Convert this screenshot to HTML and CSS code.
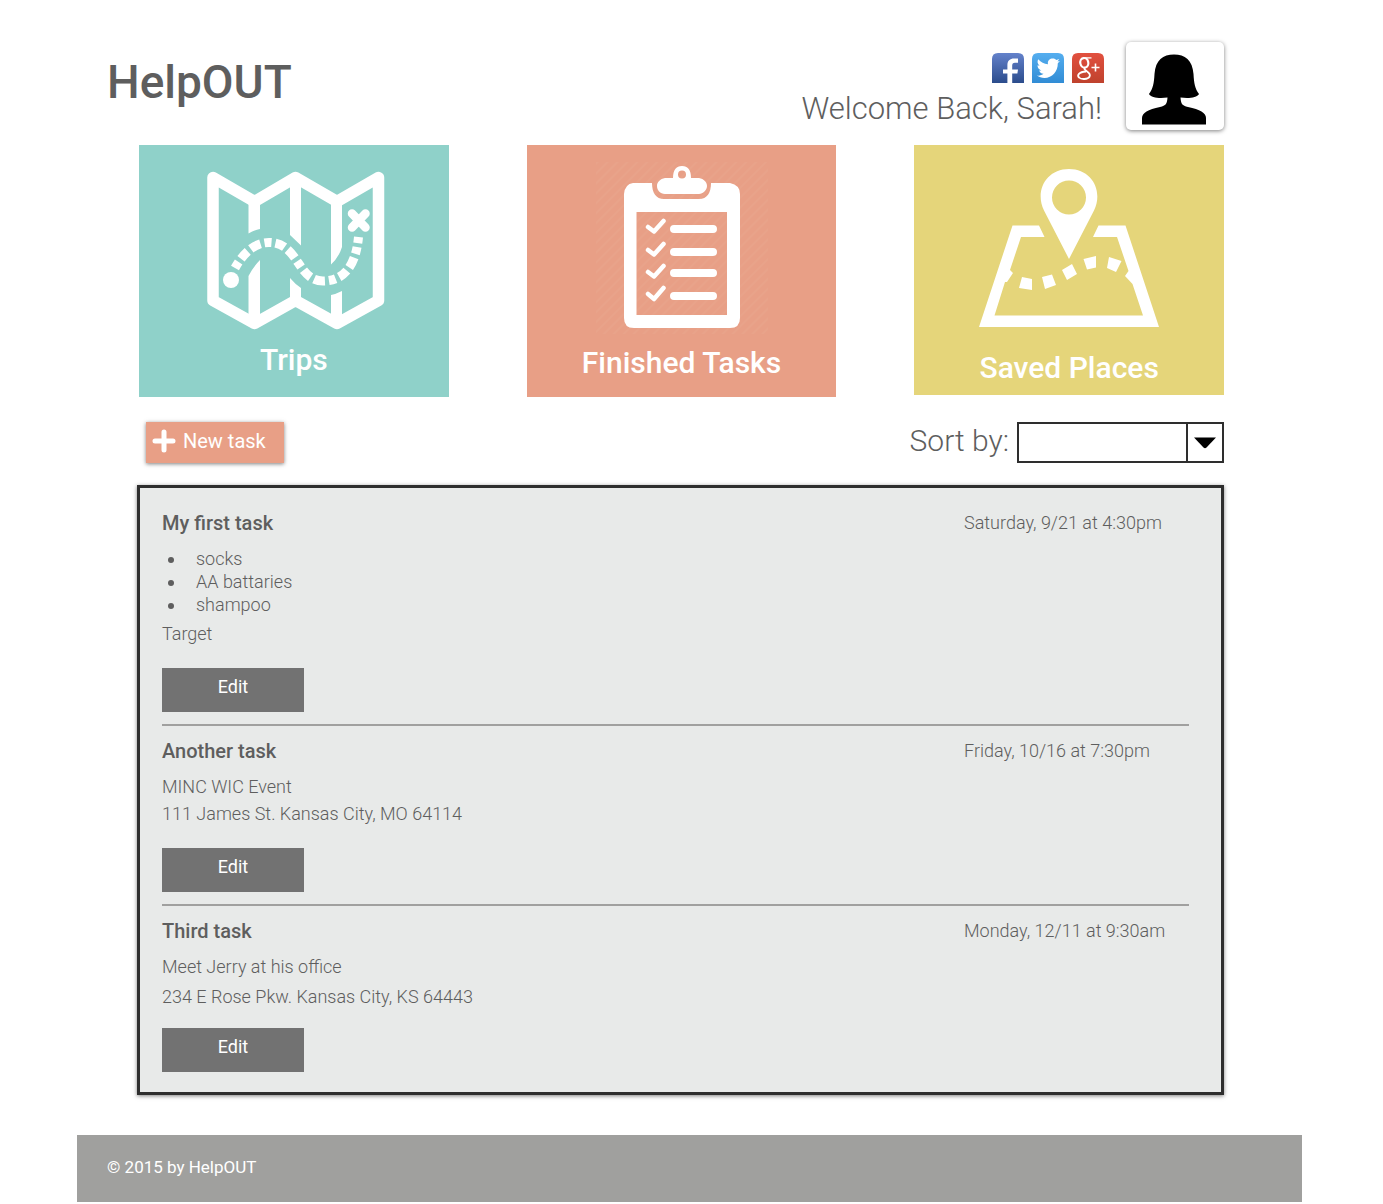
FILE: index.html
```html
<!DOCTYPE html>
<html lang="en">
<head>
<meta charset="utf-8">
<meta name="viewport" content="width=device-width, initial-scale=1">
<title>HelpOUT</title>
<link rel="stylesheet" href="styles.css">
</head>
<body>
<div class="page">
  <header class="header">
    <h1 class="brand">HelpOUT</h1>
    <div class="account">
      <div class="account-info">
        <nav class="social" aria-label="Social media">
          <a href="#" aria-label="Facebook">
            <svg width="32" height="30" viewBox="0 0 32 30">
              <defs><linearGradient id="fb" x1="0" y1="0" x2="0" y2="1"><stop offset="0" stop-color="#6482cb"/><stop offset="1" stop-color="#2b4c8c"/></linearGradient></defs>
              <path d="M0 30V6Q0 0 6 0H26Q32 0 32 6V30Z" fill="url(#fb)"/>
              <path d="M15.400 30V20.500H11V16.500H15.400V12.500C15.400 7.500 18 5.500 22 5.500H26V9.700H23C20.800 9.700 20.200 10.800 20.200 12.800V16.500H26L25.400 20.500H20.200V30Z" fill="#fff"/>
            </svg>
          </a>
          <a href="#" aria-label="Twitter">
            <svg width="32" height="30" viewBox="0 0 32 30">
              <defs><linearGradient id="tw" x1="0" y1="0" x2="0" y2="1"><stop offset="0" stop-color="#55aeef"/><stop offset="1" stop-color="#318cd5"/></linearGradient></defs>
              <path d="M0 30V6Q0 0 6 0H26Q32 0 32 6V30Z" fill="url(#tw)"/>
              <path d="M5 22.600C8 22.900 10 22 11.500 20.800C9 20.600 7.700 19.200 7.200 17.400H9.300C6.800 16.500 5.500 14.600 5.500 12.200L7.600 12.800C5.500 11 5 8.500 6.200 6.300C9 9.400 12 11 16 11.300C15.200 7.500 18 5.500 20.800 5.500C22.500 5.500 23.600 6.200 24.400 7L27.200 6L25.500 8.600L27.900 8L25.800 10.300C26 18.500 20 25 12.500 25C9.500 25 7 24 5 22.600Z" fill="#fff"/>
            </svg>
          </a>
          <a href="#" aria-label="Google Plus">
            <svg width="32" height="30" viewBox="0 0 32 30">
              <defs><linearGradient id="gp" x1="0" y1="0" x2="0" y2="1"><stop offset="0" stop-color="#e2503f"/><stop offset="1" stop-color="#bf422d"/></linearGradient></defs>
              <path d="M0 30V6Q0 0 6 0H26Q32 0 32 6V30Z" fill="url(#gp)"/>
              <g fill="none" stroke="#fff">
                <ellipse cx="12.300" cy="9.800" rx="4" ry="4.800" stroke-width="2.200" transform="rotate(-12 12.300 9.800)"/>
                <path d="M12 4.900H19.500" stroke-width="1.300"/>
                <path d="M13 14.500C11.500 16 13 16.800 14.800 18.300C18 20.500 18.500 22 17.500 23.800C16 26.500 9 26.700 7 24.500C5 22.500 6.500 19 14 18.500" stroke-width="1.800"/>
                <path d="M23.500 10.500V18.500M19.500 14.500H27.500" stroke-width="1.600"/>
              </g>
            </svg>
          </a>
        </nav>
        <p class="welcome">Welcome Back, Sarah!</p>
      </div>
      <a class="avatar" href="#" aria-label="Profile">
        <svg width="64" height="71" viewBox="0 0 64 71">
          <path d="M7 40C11 35 12 29 12.500 20C13.500 6 21 .5 32 .5S50.500 6 51.500 20C52 29 53 35 57 40C55 44 46 44.500 38.500 43.500C39 50 40 51.500 46 53C58 55.500 64 59 64 64V70.500H0V64C0 59 6 55.500 18 53C24 51.500 25 50 25.500 43.500C18 44.500 9 44 7 40Z"/>
        </svg>
      </a>
    </div>
  </header>

  <main class="main">
    <nav class="cards" aria-label="Sections">
      <a class="card card-trips" href="#">
        <svg width="182" height="160" viewBox="-4 0 182 160">
          <g fill="none" stroke="#fff" stroke-width="11.500" stroke-linejoin="round">
            <path d="M6 7.500L47.500 31.500L88.500 7.500L130 31.500L171.500 7.500V130.500L130 153.500L88.500 130.500L47.500 153.500L6 130.500Z"/>
          </g>
          <g fill="#fff">
            <path d="M41.500 31H53V59Q47 60 41.500 63.500ZM83 10H94V75.500L83 65ZM124 31H135V77Q132 87 124 94.500Z"/>
            <path d="M41.500 153V106Q46 97 53 90V153ZM83 130V108Q88 114 94 118V130ZM124 153V125Q129 124 135 121V153Z"/>
            <circle cx="24" cy="110" r="8"/>
          </g>
          <path d="M28 98C38 80 50 72.500 62 72.500C92 72.500 90 111 116 111C138 111 149 94 151.500 67" fill="none" stroke="#fff" stroke-width="9" stroke-dasharray="7 4 10 4 11 4"/>
          <path d="M145 43.500L158.500 57.500M158.500 43.500L145 57.500" stroke="#fff" stroke-width="8.500" stroke-linecap="round"/>
        </svg>
        <span class="card-label">Trips</span>
      </a>
      <a class="card card-finished" href="#">
        <svg width="174" height="172" viewBox="-29 -3 174 172">
          <defs><pattern id="hatch" width="7" height="7" patternUnits="userSpaceOnUse" patternTransform="rotate(45)"><path d="M1 0V7" stroke="#e8a78e" stroke-width="1"/></pattern></defs>
          <path d="M-27-3H145V169H-27Z" fill="url(#hatch)"/>
          <path fill="#fff" fill-rule="evenodd" d="M10 18H29C29 28 33 34 41 34H76C84 34 88 28 88 18H107Q117 20 117 29V153Q117 163 107 163H11Q1 163 1 153V29Q2 19 10 18ZM13.500 47V150H104V47Z"/>
          <path fill="#fff" fill-rule="evenodd" d="M50 13C50 5 53 1 59 1S68 5 68 13H76C81 14 84 17 84 21S80 29 76 29H42C37 29 34 25 34 21S37 14 42 13ZM59 5.500A4 4 0 1 0 59 13.500A4 4 0 1 0 59 5.500Z"/>
          <g fill="none" stroke="#fff" stroke-linecap="round" stroke-linejoin="round">
            <path stroke-width="4.500" d="M25 62L31 66.500L40.500 56M25 85L31 89.500L40.500 79M25 107L31 111.500L40.500 101M25 129L31 134L40.500 123"/>
            <path stroke-width="8" d="M51 64H90M51 87H90M51 108H90M51 131H90"/>
          </g>
        </svg>
        <span class="card-label">Finished Tasks</span>
      </a>
      <a class="card card-saved" href="#">
        <svg width="180" height="158" viewBox="0 0 180 158">
          <g fill="#fff">
            <path fill-rule="evenodd" d="M90 90L65 41.500C55.500 22 67 0 90 0S124.500 22 115 41.500ZM90 11.500A17 17 0 1 0 90 45.500A17 17 0 1 0 90 11.500Z"/>
            <path d="M60 56.500L65.500 68H42L31 101L34 104L28 113H26L15.500 146.500H164L153.500 115L146 107L149.500 102L138 68H114L119.500 56.500H146.500L180 158H0L33.500 56.500Z"/>
            <path d="M43 108L53 110V121L40 119ZM63 108L73 105.500L77 116L66 120ZM83 101L93 95L98 105L88 111ZM104.500 90L117 87V98.500L108 100.500ZM130 88L142.500 92L137 103L128 99Z"/>
          </g>
        </svg>
        <span class="card-label">Saved Places</span>
      </a>
    </nav>

    <div class="toolbar">
      <button class="new-task" type="button">
        <svg width="24" height="24" viewBox="0 0 24 24"><path d="M12 3V21M3 12H21" stroke="#fff" stroke-width="5" stroke-linecap="round"/></svg>
        New task
      </button>
      <div class="sort">
        <label for="sort">Sort by:</label>
        <div class="select">
          <select id="sort"><option value=""></option></select>
          <span class="select-arrow"><svg width="22" height="12" viewBox="0 0 22 12"><path d="M0 .5H22L12.500 10.500Q11 12 9.500 10.500Z"/></svg></span>
        </div>
      </div>
    </div>

    <section class="tasks" aria-label="Tasks">
      <article class="task">
        <div class="task-head">
          <h2>My first task</h2>
          <time>Saturday, 9/21 at 4:30pm</time>
        </div>
        <div class="task-body">
          <ul>
            <li>socks</li>
            <li>AA battaries</li>
            <li>shampoo</li>
          </ul>
          <p>Target</p>
        </div>
        <button class="edit" type="button">Edit</button>
      </article>
      <article class="task">
        <div class="task-head">
          <h2>Another task</h2>
          <time>Friday, 10/16 at 7:30pm</time>
        </div>
        <div class="task-body task-body-tight">
          <p>MINC WIC Event</p>
          <p>111 James St. Kansas City, MO 64114</p>
        </div>
        <button class="edit" type="button">Edit</button>
      </article>
      <article class="task">
        <div class="task-head">
          <h2>Third task</h2>
          <time>Monday, 12/11 at 9:30am</time>
        </div>
        <div class="task-body">
          <p>Meet Jerry at his office</p>
          <p>234 E Rose Pkw. Kansas City, KS 64443</p>
        </div>
        <button class="edit" type="button">Edit</button>
      </article>
    </section>
  </main>

  <footer class="footer">© 2015 by HelpOUT</footer>
</div>
</body>
</html>
```
FILE: styles.css
```css
* {
  box-sizing: border-box;
}

body {
  margin: 0;
  background: #fff;
  color: #5e5e5e;
  font-family: Roboto, "Liberation Sans", sans-serif;
  font-size: 18px;
  font-weight: 300;
  line-height: 24px;
}

h1, h2, p, ul {
  margin: 0;
}

svg {
  display: block;
}

a {
  color: inherit;
  text-decoration: none;
}

button, select {
  font: inherit;
  border: 0;
  border-radius: 0;
}

.page {
  margin: 0 81px 0 77px;
}

.header {
  display: flex;
  justify-content: space-between;
  align-items: flex-start;
  padding: 42px 78px 15px 30px;
}

.brand {
  padding-top: 12px;
  font-size: 46px;
  font-weight: 500;
  line-height: 56px;
}

.account {
  display: flex;
  gap: 22px;
}

.account-info {
  padding-top: 11px;
}

.social {
  display: flex;
  justify-content: flex-end;
  gap: 8px;
}

.welcome {
  padding: 8px 2px 0 0;
  font-size: 31px;
  line-height: 36px;
}

.avatar {
  display: flex;
  justify-content: center;
  align-items: flex-end;
  width: 98px;
  height: 88px;
  padding: 0 2px 5px 0;
  border-radius: 5px;
  background: #fff;
  box-shadow: 0 1px 4px rgba(0, 0, 0, 0.5);
}

.main {
  padding: 0 78px 40px 60px;
}

.cards {
  display: grid;
  grid-template-columns: repeat(3, 1fr);
  align-items: start;
  gap: 78px;
  padding-left: 2px;
}

.card {
  display: flex;
  flex-direction: column;
  align-items: center;
  min-height: 252px;
  color: #fff;
  font-size: 30px;
  font-weight: 500;
  line-height: 36px;
}

.card-trips {
  gap: 12px;
  padding-top: 25px;
  background: #8fd1c9;
}

.card-finished {
  gap: 11px;
  padding-top: 17px;
  background: #e89f86;
}

.card-saved {
  gap: 23px;
  min-height: 250px;
  padding-top: 24px;
  background: #e5d57a;
}

.toolbar {
  display: flex;
  justify-content: space-between;
  padding: 25px 0 22px 9px;
}

.new-task {
  display: flex;
  align-items: center;
  gap: 7px;
  width: 138px;
  height: 41px;
  padding: 0 0 4px 6px;
  background: #e89f86;
  box-shadow: 0 1px 4px rgba(0, 0, 0, 0.5);
  color: #fff;
  font-size: 20px;
  font-weight: 400;
}

.sort {
  display: flex;
  gap: 8px;
  font-size: 30px;
  line-height: 37px;
}

.select {
  position: relative;
  width: 207px;
  height: 41px;
}

.select select {
  width: 100%;
  height: 100%;
  border: 2px solid #2e2e2e;
  background: #fff;
  appearance: none;
}

.select-arrow {
  position: absolute;
  top: 0;
  right: 0;
  display: flex;
  justify-content: center;
  align-items: center;
  width: 38px;
  height: 100%;
  border: 2px solid #2e2e2e;
  pointer-events: none;
}

.tasks {
  padding: 23px 32px 20px 22px;
  border: 3px solid #2e2e2e;
  background: #e8eae9;
  box-shadow: 0 1px 4px rgba(0, 0, 0, 0.5);
}

.task + .task {
  margin-top: 12px;
  padding-top: 13px;
  border-top: 2px solid #a0a09f;
}

.task-head {
  display: grid;
  grid-template-columns: 1fr 225px;
  margin-bottom: 12px;
}

.task h2 {
  font-size: 20px;
  font-weight: 500;
  line-height: 24px;
}

.task-body {
  display: flex;
  flex-direction: column;
  gap: 6px;
  margin-bottom: 22px;
}

.task-body-tight {
  gap: 3px;
}

.task:last-child .task-body {
  margin-bottom: 19px;
}

.task ul {
  padding-left: 24px;
  line-height: 23px;
}

.task li {
  padding-left: 10px;
}

.edit {
  display: block;
  width: 142px;
  height: 44px;
  padding: 0 0 6px;
  background: #727272;
  color: #fff;
  font-weight: 400;
}

.footer {
  margin-bottom: 2px;
  padding: 20px 30px 23px;
  background: #a0a09e;
  color: #fff;
  font-size: 17px;
  font-weight: 400;
}
```
